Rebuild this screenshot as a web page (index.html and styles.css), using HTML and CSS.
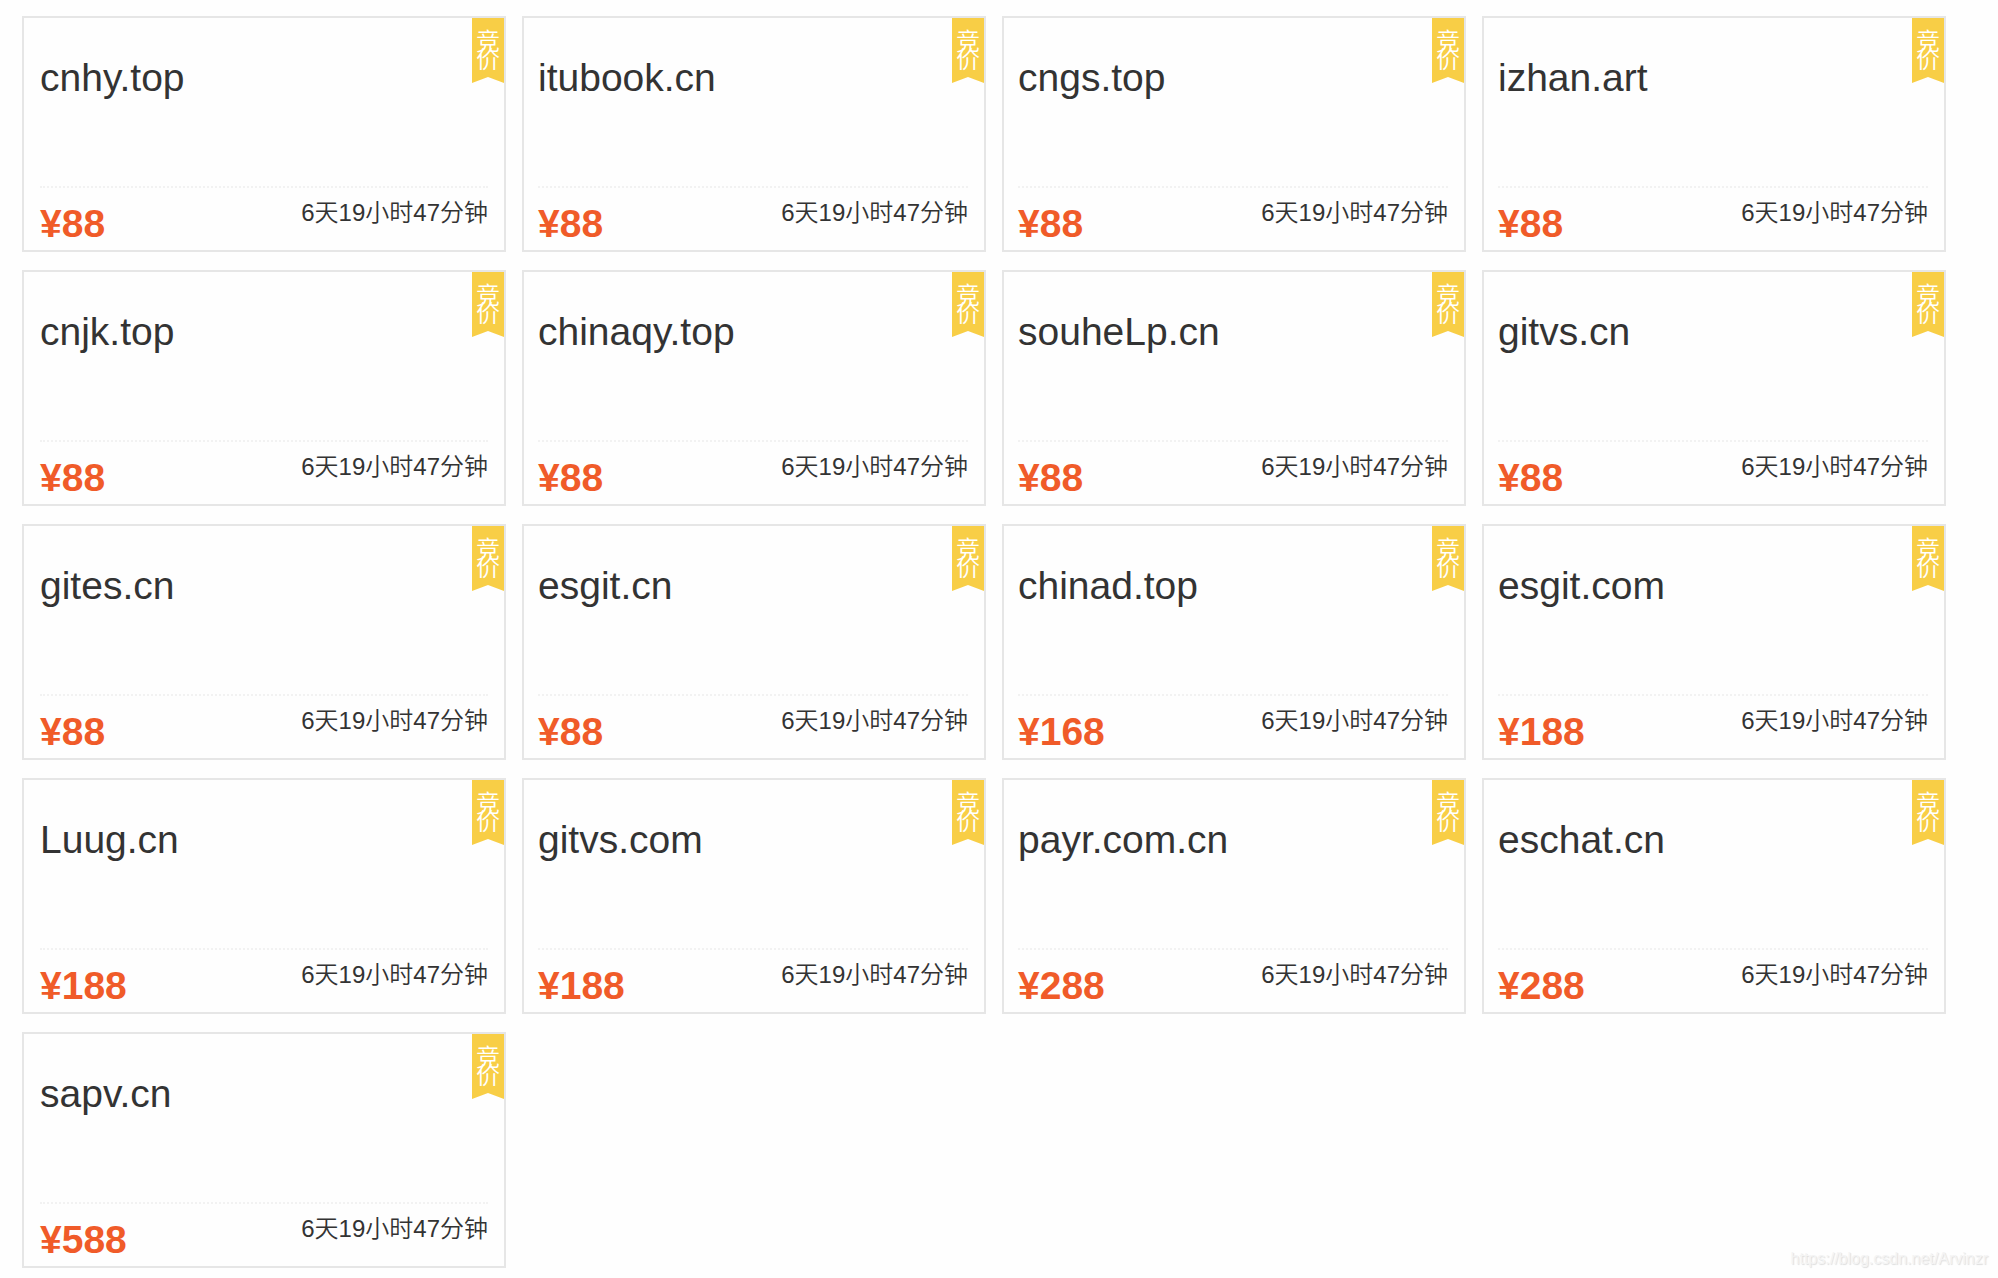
FILE: index.html
```html
<!DOCTYPE html>
<html lang="zh-CN">
<head>
    <meta charset="UTF-8">
    <meta name="viewport" content="width=device-width, initial-scale=1.0">
    <title>域名竞价</title>
    <link rel="stylesheet" href="styles.css">
    <script>
        const domains = [
            ['cnhy.top', 88],
            ['itubook.cn', 88],
            ['cngs.top', 88],
            ['izhan.art', 88],
            ['cnjk.top', 88],
            ['chinaqy.top', 88],
            ['souheLp.cn', 88],
            ['gitvs.cn', 88],
            ['gites.cn', 88],
            ['esgit.cn', 88],
            ['chinad.top', 168],
            ['esgit.com', 188],
            ['Luug.cn', 188],
            ['gitvs.com', 188],
            ['payr.com.cn', 288],
            ['eschat.cn', 288],
            ['sapv.cn', 588]
        ];

        // Build one card for each domain
        function renderDomains() {
            const list = document.getElementById('domain-list');
            domains.forEach(([name, price]) => {
                const item = document.createElement('li');
                item.className = 'card';
                item.innerHTML = `
                    <span class="ribbon">竞<br>价</span>
                    <a class="name" href="#">${name}</a>
                    <div class="info">
                        <strong class="price">¥${price}</strong>
                        <span class="time">6天19小时47分钟</span>
                    </div>
                `;
                list.appendChild(item);
            });
        }

        window.addEventListener('DOMContentLoaded', renderDomains);
    </script>
</head>
<body>
    <ul class="domains" id="domain-list"></ul>
    <div class="watermark">https://blog.csdn.net/Arvinzr</div>
</body>
</html>
```
FILE: styles.css
```css
* {
    box-sizing: border-box;
}
body {
    margin: 0;
    font-family: "Liberation Sans", "Noto Sans CJK SC", sans-serif;
    background-color: #fefefe;
    color: #333;
}
.domains {
    display: grid;
    grid-template-columns: 484fr 464fr 464fr 464fr;
    gap: 18px 16px;
    margin: 0;
    padding: 16px 52px 10px 22px;
    list-style: none;
}
.card {
    position: relative;
    display: flex;
    flex-direction: column;
    justify-content: space-between;
    height: 236px;
    padding: 36px 16px 0 14px;
    border: 2px solid #e6e6e6;
    background-color: #fefefe;
}
.card:nth-child(4n+1) {
    padding-left: 16px;
}
.name {
    font-size: 39px;
    line-height: 48px;
    color: #333;
    text-decoration: none;
}
.info {
    display: flex;
    justify-content: space-between;
    align-items: flex-start;
    height: 64px;
    border-top: 2px dotted #f2f2f2;
}
.price {
    padding-top: 16px;
    font-size: 39px;
    line-height: 40px;
    color: #f05b29;
}
.time {
    padding-top: 8px;
    font-size: 24px;
    font-weight: 350;
    line-height: 34px;
}
.ribbon {
    position: absolute;
    top: 0;
    right: 0;
    width: 32px;
    height: 65px;
    padding-top: 15px;
    background-color: #f8ce46;
    clip-path: polygon(0 0, 100% 0, 100% 100%, 50% 59px, 0 100%);
    color: #fff;
    font-size: 24px;
    font-weight: 350;
    line-height: 18px;
    text-align: center;
}
.watermark {
    position: absolute;
    right: 10px;
    bottom: 9px;
    font-size: 16px;
    line-height: 20px;
    color: #f4f4f4;
    text-shadow: 1px 1px 1px #ddd;
}
```
